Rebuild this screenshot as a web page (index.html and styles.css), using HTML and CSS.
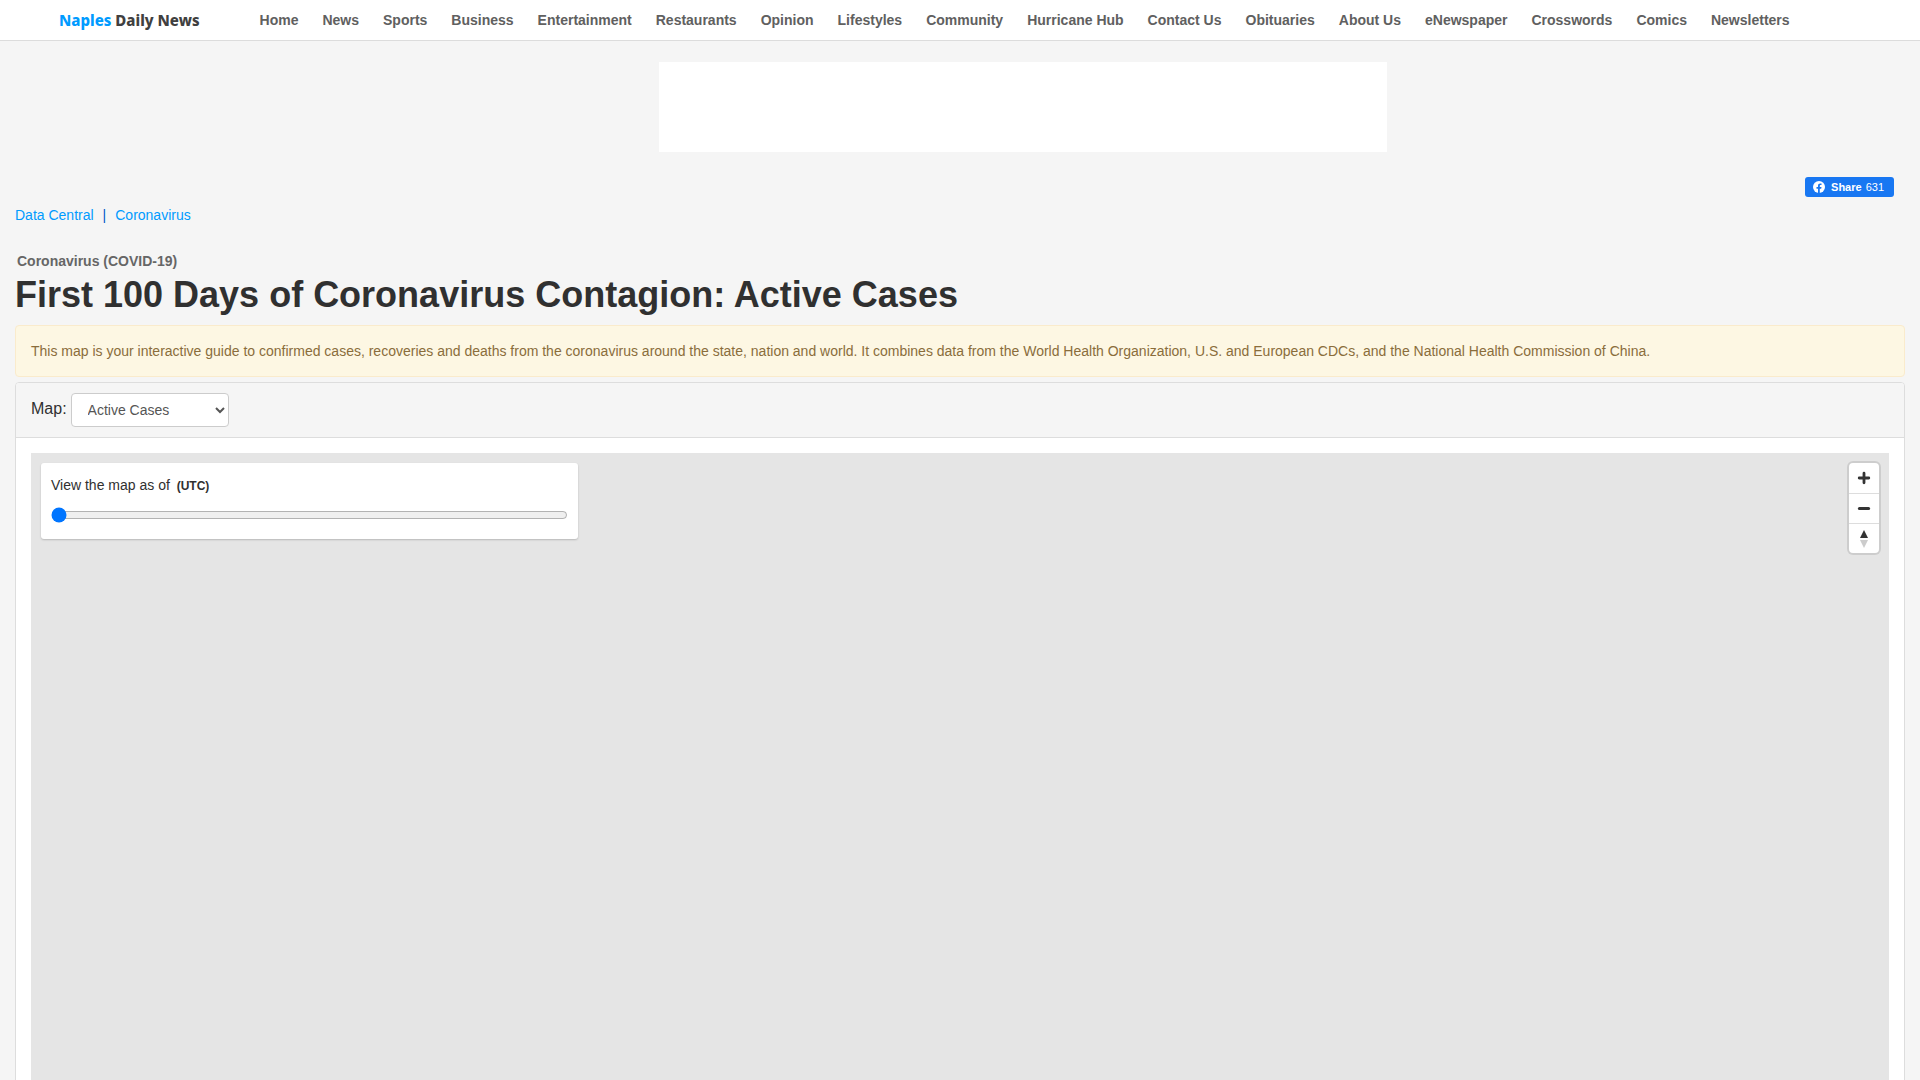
FILE: index.html
```html
<!DOCTYPE html>
<html lang="en">
<head>
<meta charset="utf-8">
<meta name="viewport" content="width=device-width, initial-scale=1">
<title>First 100 Days of Coronavirus Contagion: Active Cases</title>
<link rel="stylesheet" href="styles.css">
</head>
<body>
<header class="site-header">
  <a class="logo" href="#"><span class="logo-accent">Naples</span> Daily News</a>
  <nav class="site-nav">
    <a href="#">Home</a>
    <a href="#">News</a>
    <a href="#">Sports</a>
    <a href="#">Business</a>
    <a href="#">Entertainment</a>
    <a href="#">Restaurants</a>
    <a href="#">Opinion</a>
    <a href="#">Lifestyles</a>
    <a href="#">Community</a>
    <a href="#">Hurricane Hub</a>
    <a href="#">Contact Us</a>
    <a href="#">Obituaries</a>
    <a href="#">About Us</a>
    <a href="#">eNewspaper</a>
    <a href="#">Crosswords</a>
    <a href="#">Comics</a>
    <a href="#">Newsletters</a>
  </nav>
</header>
<main class="page">
  <div class="ad-row"><div class="ad-slot"></div></div>
  <div class="share-row">
    <button class="share" type="button">
      <svg class="share-icon" viewBox="0 0 12 12" aria-hidden="true">
        <circle cx="6" cy="6" r="6" fill="#fff"/>
        <path d="M5 12V7.8H3.5V6.1H5V4.8C5 3.2 5.9 2.4 7.3 2.4c.6 0 1.2.1 1.2.1v1.4h-.7c-.8 0-1 .5-1 1v1.2h1.7l-.3 1.7H6.8V12z" fill="#1877f2"/>
      </svg>
      <span class="share-label">Share</span>
      <span>631</span>
    </button>
  </div>
  <nav class="breadcrumb">
    <a href="#">Data Central</a>
    <span class="divider">|</span>
    <a href="#">Coronavirus</a>
  </nav>
  <p class="kicker">Coronavirus (COVID-19)</p>
  <h1 class="title">First 100 Days of Coronavirus Contagion: Active Cases</h1>
  <p class="notice">This map is your interactive guide to confirmed cases, recoveries and deaths from the coronavirus around the state, nation and world. It combines data from the World Health Organization, U.S. and European CDCs, and the National Health Commission of China.</p>
  <section class="card">
    <div class="card-header">
      <label class="map-label" for="map-type">Map:</label>
      <select class="map-select" id="map-type">
        <option>Active Cases</option>
      </select>
    </div>
    <div class="card-body">
      <div class="map">
        <div class="date-panel">
          <label class="date-label" for="map-date">View the map as of <strong class="zone">(UTC)</strong></label>
          <input class="date-slider" id="map-date" type="range" min="0" max="99" value="0">
        </div>
        <div class="map-controls">
          <button type="button" aria-label="Zoom in">
            <svg viewBox="0 0 30 30"><path d="M15 10.2v9.6M10.2 15h9.6" stroke="#333" stroke-width="2.8" stroke-linecap="round"/></svg>
          </button>
          <button type="button" aria-label="Zoom out">
            <svg viewBox="0 0 30 30"><path d="M10.4 14.5h9.2" stroke="#333" stroke-width="3" stroke-linecap="round"/></svg>
          </button>
          <button type="button" aria-label="Reset bearing to north">
            <svg viewBox="0 0 30 30"><path d="M11 14l4-8 4 8z" fill="#333"/><path d="M11 16l4 8 4-8z" fill="#ccc"/></svg>
          </button>
        </div>
      </div>
    </div>
  </section>
</main>
</body>
</html>
```
FILE: styles.css
```css
* {
  box-sizing: border-box;
}

body {
  margin: 0;
  background: #f5f5f5;
  color: #303030;
  font: 14px/20px "Liberation Sans", Arial, sans-serif;
}

a {
  color: #009bff;
  text-decoration: none;
}

.site-header {
  display: flex;
  align-items: center;
  height: 41px;
  padding: 0 59px;
  gap: 60px;
  background: #fff;
  border-bottom: 1px solid #dcdcdc;
}

.logo {
  color: #404040;
  font: 800 15px/20px "Noto Sans", sans-serif;
  white-space: nowrap;
}

.logo-accent {
  color: #009bff;
}

.site-nav {
  display: flex;
  gap: 24px;
  white-space: nowrap;
}

.site-nav a {
  color: #606060;
  font-weight: bold;
}

.page {
  padding: 21px 15px 0;
}

.ad-row {
  display: flex;
  justify-content: center;
  padding-left: 126px;
}

.ad-slot {
  width: 728px;
  height: 90px;
  background: #fff;
}

.share-row {
  display: flex;
  justify-content: flex-end;
  padding: 25px 11px 8px;
}

.share {
  display: flex;
  align-items: center;
  gap: 4px;
  height: 20px;
  padding: 0 10px 0 8px;
  border: 0;
  border-radius: 3px;
  background: #1877f2;
  color: #fff;
  font: 11px/20px "Liberation Sans", Arial, sans-serif;
}

.share-icon {
  width: 12px;
  height: 12px;
  margin-right: 2px;
}

.share-label {
  font-weight: bold;
}

.breadcrumb {
  display: flex;
  gap: 9px;
}

.divider {
  color: #0055c8;
}

.kicker {
  margin: 26px 2px 0;
  color: #666;
  font-weight: bold;
}

.title {
  margin: 3px 0 9px;
  font-size: 36px;
  line-height: 42px;
}

.notice {
  margin: 0 0 5px;
  padding: 15px;
  border: 1px solid #faebcc;
  border-radius: 4px;
  background: #fdf7e3;
  color: #8a6d3b;
}

.card {
  border: 1px solid #ddd;
  border-radius: 4px;
  background: #fff;
}

.card-header {
  display: flex;
  gap: 4px;
  padding: 10px 15px;
  border-bottom: 1px solid #ddd;
  border-radius: 3px 3px 0 0;
  background: #f5f5f5;
}

.map-label {
  font-size: 16px;
  line-height: 32px;
}

.map-select {
  width: 158px;
  height: 34px;
  padding: 6px 0 6px 12px;
  border: 1px solid #ccc;
  border-radius: 4px;
  background: #fff;
  color: #555;
  font: 14px/20px "Liberation Sans", Arial, sans-serif;
}

.card-body {
  padding: 15px;
}

.map {
  display: flex;
  justify-content: space-between;
  align-items: flex-start;
  min-height: 100vh;
  padding: 10px;
  background: #e5e5e5;
}

.date-panel {
  flex: 0 1 537px;
  height: 76px;
  padding: 12px 10px;
  border-radius: 3px;
  background: #fff;
  box-shadow: 0 1px 2px rgba(0, 0, 0, 0.2);
}

.date-label {
  display: block;
}

.zone {
  margin-left: 3px;
  font-size: 12px;
}

.date-slider {
  display: block;
  width: 100%;
  height: 16px;
  margin: 11px 0 0;
}

.map-controls {
  display: flex;
  flex-direction: column;
  border-radius: 4px;
  background: #fff;
  box-shadow: 0 0 0 2px rgba(0, 0, 0, 0.1);
}

.map-controls button {
  width: 30px;
  height: 30px;
  padding: 0;
  border: 0;
  background: transparent;
}

.map-controls button + button {
  border-top: 1px solid #ddd;
}

.map-controls svg {
  display: block;
  width: 30px;
  height: 30px;
}
```
